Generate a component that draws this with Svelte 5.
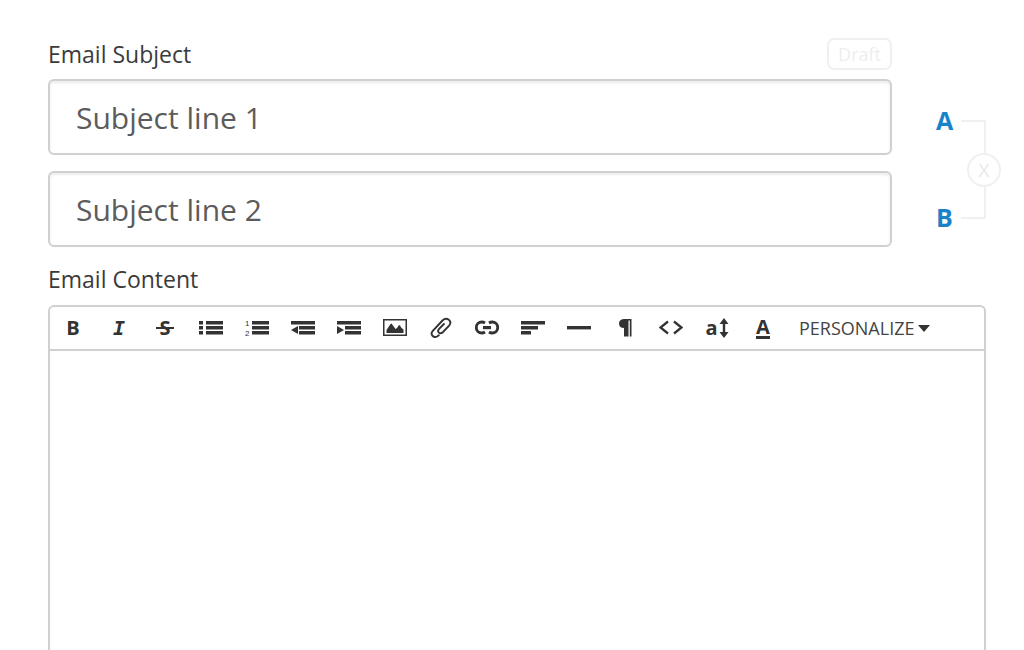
<script>
	let subjects = $state(["Subject line 1", "Subject line 2"]);
	let content = $state("");

	const tools = [
		{ id: "bold", label: "Bold", text: "B" },
		{ id: "italic", label: "Italic", text: "I" },
		{ id: "strike", label: "Strikethrough", text: "S" },
		{ id: "bullets", label: "Bulleted list" },
		{ id: "numbers", label: "Numbered list" },
		{ id: "outdent", label: "Outdent" },
		{ id: "indent", label: "Indent" },
		{ id: "image", label: "Insert image" },
		{ id: "file", label: "Attach file" },
		{ id: "link", label: "Insert link" },
		{ id: "align", label: "Align" },
		{ id: "rule", label: "Horizontal rule" },
		{ id: "paragraph", label: "Paragraph format" },
		{ id: "code", label: "Source" },
		{ id: "size", label: "Font size", text: "a" },
		{ id: "color", label: "Text color", text: "A" },
	];

	const shapes = {
		bullets: "M0 5h4v3.4H0zM0 10h4v3.4H0zM0 15h4v3.4H0zM7 5h17v3.4H7zM7 10h17v3.4H7zM7 15h17v3.4H7z",
		numbers: "M7 5h17v3.4H7zM7 10h17v3.4H7zM7 15h17v3.4H7z",
		outdent: "M0 5h24v3.4H0zM8 10h16v3.4H8zM8 15h16v3.4H8zM0 14l7-4v8z",
		indent: "M0 5h24v3.4H0zM8 10h16v3.4H8zM8 15h16v3.4H8zM7 14l-7-4v8z",
		image: "M0 3h24v17H0zM1.5 4.5v14h21v-14zM3.5 17v-3l4-6 1-.5 4 5.5 1.5-1 2-3 1 .5 1.500 2.500 2 1.500v3.500z",
		align: "M0 5h24v3.4H0zM0 10h17v3.4H0zM0 15h10v3.4H0z",
		rule: "M0 10h24v3.4H0z",
		paragraph: "M18.5 3v17.5h-1.7v-16h-1.3v16H11V12C8 12 6 10.5 6 7.5S8 3 11.5 3z",
	};

	function clearTest() {
		subjects = [subjects[0]];
	}
</script>

<main>
	<div class="heading">
		<label for="subject-0">Email Subject</label>
		<span class="status">Draft</span>
	</div>

	<div class="subjects">
		<div class="fields">
			{#each subjects as _, i}
				<input type="text" id="subject-{i}" aria-label="Subject line {i + 1}" bind:value={subjects[i]} />
			{/each}
		</div>

		{#if subjects.length > 1}
			<div class="split">
				<div class="letters">
					<span>A</span>
					<span>B</span>
				</div>
				<div class="bracket">
					<button type="button" aria-label="Remove subject test" onclick={clearTest}>X</button>
				</div>
			</div>
		{/if}
	</div>

	<label class="content-label" for="content">Email Content</label>

	<div class="editor">
		<div class="toolbar">
			{#each tools as tool}
				<button type="button" class="tool" aria-label={tool.label}>
					{#if tool.text}
						<span class="letter {tool.id}">{tool.text}</span>
						{#if tool.id === "size"}
							<svg viewBox="0 0 10 20" width="10" height="20" aria-hidden="true">
								<path d="M5 0l4.5 6H6.2v8h3.3L5 20l-4.500-6h3.300V6H.5z" />
							</svg>
						{/if}
					{:else}
						<svg viewBox="0 0 24 24" width="24" height="24" aria-hidden="true">
							{#if shapes[tool.id]}
								<path d={shapes[tool.id]} fill-rule="evenodd" />
							{/if}
							{#if tool.id === "numbers"}
								<text class="digit" x="0" y="10">1</text>
								<text class="digit" x="0" y="20">2</text>
							{:else if tool.id === "file"}
								<path
									class="stroke thin"
									d="M9.8 19.2l-1.3 1c-4 2.4-7.8-1.8-4.7-5.4L13.5 4.5c4.2-4.3 10.3.5 6.6 5.2l-6.3 6.5c-3 2.7-6.2-.6-3.7-3.4l4.8-4.8"
								/>
							{:else if tool.id === "link"}
								<path
									class="stroke thick"
									d="M10 7C9 6.3 8 6 6.8 6a5.4 5.4 0 0 0 0 11c1.2 0 2.2-.3 3.2-1M14 7c1-.7 2-1 3.2-1a5.4 5.4 0 0 1 0 11c-1.2 0-2.2-.3-3.2-1"
								/>
								<path d="M8 10h8v3.2H8z" />
							{:else if tool.id === "code"}
								<path class="stroke" d="M9 5.5l-7.5 6 7.5 6M15 5.5l7.5 6-7.5 6" />
							{/if}
						</svg>
					{/if}
				</button>
			{/each}
			<button type="button" class="personalize">
				PERSONALIZE
				<svg viewBox="0 0 12 8" width="12" height="8" aria-hidden="true"><path d="M0 1h12L6 8z" /></svg>
			</button>
		</div>
		<textarea id="content" bind:value={content}></textarea>
	</div>
</main>

<style>
	:global(body) {
		background: #fff;
	}
	main {
		box-sizing: border-box;
		min-height: 100vh;
		padding: 38px 22px 0 48px;
		display: flex;
		flex-direction: column;
		font-family: "Open Sans", "Noto Sans", sans-serif;
		color: #3b3b3b;
	}
	label {
		font-size: 23px;
		line-height: 32px;
	}
	button {
		font-family: inherit;
		padding: 0;
		border: 0;
		background: none;
		color: inherit;
		cursor: pointer;
	}

	.heading {
		display: flex;
		justify-content: space-between;
		align-items: center;
		margin: 0 110px 9px 0;
	}
	.status {
		border: 2px solid #f0f0f0;
		border-radius: 7px;
		padding: 0 9px;
		font-size: 18px;
		line-height: 28px;
		color: #eee;
	}

	.subjects {
		display: grid;
		grid-template-columns: 1fr 110px;
	}
	.fields {
		display: flex;
		flex-direction: column;
		gap: 16px;
	}
	.fields input {
		box-sizing: border-box;
		width: 100%;
		height: 76px;
		padding: 0 26px;
		border: 2px solid #d0d0d0;
		border-radius: 6px;
		box-shadow: inset 0 2px 3px rgba(0, 0, 0, 0.08);
		font-family: inherit;
		font-size: 30px;
		color: #5c5c5c;
	}

	.split {
		display: flex;
		padding-left: 44px;
	}
	.letters {
		display: flex;
		flex-direction: column;
		justify-content: space-between;
		width: 25px;
		padding: 24px 0 13px;
		font-size: 25px;
		font-weight: bold;
		line-height: 34px;
		color: #1a82c9;
	}
	.bracket {
		position: relative;
		box-sizing: border-box;
		width: 25px;
		margin: 41px 0 28px;
		border: 2px solid #f0f0f0;
		border-left: 0;
	}
	.bracket button {
		position: absolute;
		top: 50%;
		left: 100%;
		transform: translate(-50%, -50%);
		box-sizing: border-box;
		width: 34px;
		height: 34px;
		border: 2px solid #f0f0f0;
		border-radius: 50%;
		background: #fff;
		font-size: 19px;
		color: #e8e8e8;
	}

	.content-label {
		margin: 16px 0 10px;
	}
	.editor {
		flex: 1;
		display: flex;
		flex-direction: column;
		margin-right: 16px;
		border: 2px solid #d0d0d0;
		border-bottom: 0;
		border-radius: 6px 6px 0 0;
	}
	.toolbar {
		display: flex;
		border-bottom: 2px solid #d0d0d0;
	}
	.tool {
		display: flex;
		align-items: center;
		justify-content: center;
		gap: 1px;
		width: 46px;
		height: 42px;
		color: #333;
	}
	svg {
		fill: #333;
	}
	.stroke {
		fill: none;
		stroke: #333;
		stroke-width: 2.3;
	}
	.thin {
		stroke-width: 1.9;
		stroke-linecap: round;
	}
	.thick {
		stroke-width: 2.8;
	}
	.digit {
		font-family: "Liberation Sans", sans-serif;
		font-size: 8px;
	}
	.letter {
		position: relative;
		font-size: 20px;
		font-weight: bold;
		line-height: 24px;
	}
	.italic {
		font-family: "DejaVu Sans Mono", monospace;
		font-style: italic;
	}
	.strike::after {
		content: "";
		position: absolute;
		top: 11px;
		left: -3px;
		right: -3px;
		height: 2px;
		background: #333;
	}
	.color {
		line-height: 18px;
		border-bottom: 3px solid #333;
	}
	.personalize {
		display: flex;
		align-items: center;
		gap: 4px;
		padding-left: 13px;
		font-size: 18px;
		color: #444;
	}
	textarea {
		flex: 1;
		padding: 20px;
		border: 0;
		outline: 0;
		resize: none;
		background: none;
		font-family: inherit;
		font-size: 23px;
		color: inherit;
	}
</style>
